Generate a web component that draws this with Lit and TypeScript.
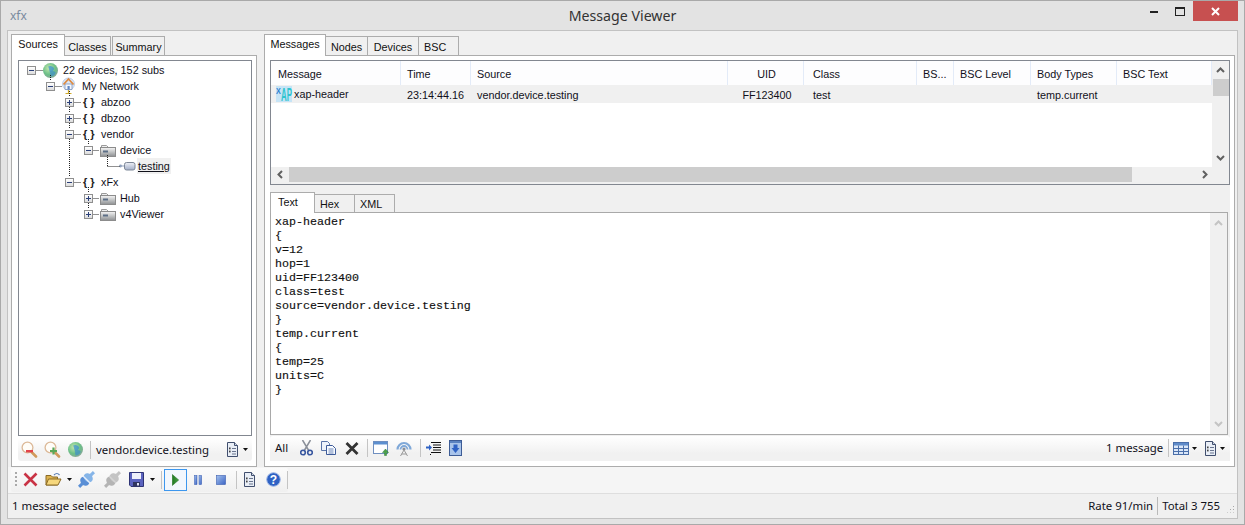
import { LitElement, html, css, svg, nothing } from "lit";
import { customElement } from "lit/decorators.js";

const s = (w: number, h: number, body: unknown, cls = "") =>
  html`<svg class="ic ${cls}" width=${w} height=${h} viewBox="0 0 ${w} ${h}">${body}</svg>`;

const globePaint = (r: number) => svg`
  <circle cx=${r} cy=${r} r=${r} fill="url(#gGlobe)"/>
  <path d="M${r * 0.7} ${r * 0.45}q${r * 0.6} -${r * 0.15} ${r * 0.8} ${r * 0.35}q-${r * 0.2} ${r * 0.5} -${r * 0.6} ${r * 0.35}z" fill="#3f93cf" opacity=".75"/>
  <path d="M${r * 0.9} ${r * 1.2}q${r * 0.6} -${r * 0.3} ${r * 0.8} ${r * 0.1}q-${r * 0.2} ${r * 0.5} -${r * 0.7} ${r * 0.5}z" fill="#3f8fc8" opacity=".7"/>`;

const globe = s(15, 15, globePaint(7.5));
const home = s(13, 18, svg`
  <circle cx="6.5" cy="7" r="6" fill="#dbe8f8" stroke="#9db6dc" stroke-width=".6"/>
  <path d="M3 7h7v5.5H3z" fill="#f4f7fc" stroke="#6f88b5" stroke-width=".7"/>
  <path d="M1.5 7.5L6.5 2l5 5.5" fill="none" stroke="#dd8a3f" stroke-width="1.8"/>
  <rect x="5.5" y="9" width="2.2" height="3.5" fill="#5f86c4"/>
  <path d="M6.5 13v3M3.5 16.5h6" stroke="#d1ab2c" stroke-width="1.2"/>`);
const folder = s(16, 13, svg`
  <path d="M1.5 3V1.5h5l1.5 1.5" fill="#eee" stroke="#9a9a9a"/>
  <rect x="0.5" y="3.5" width="15" height="9" fill="url(#gFold)" stroke="#8c8c8c"/>
  <path d="M3 7.5h5" stroke="#5d6f86" stroke-width="2"/>`);
const node = s(17, 10, svg`
  <circle cx="1.5" cy="5" r="1.4" fill="#8fa0bd"/>
  <path d="M2 5h4" stroke="#8fa0bd"/>
  <rect x="5.5" y="1.5" width="10.5" height="7.5" rx="2" fill="url(#gNode)" stroke="#7d8797"/>`);

const lens = (mark: unknown) => s(17, 17, svg`
  <path d="M9.5 10l5.5 5.5" stroke="#d09a5c" stroke-width="2.6" stroke-linecap="round"/>
  <circle cx="6.5" cy="6.5" r="5.4" fill="#fffdf8" stroke="#dcb998" stroke-width="1.3"/>
  ${mark}`);
const zoomOut = lens(svg`<rect x="5" y="9" width="7" height="2.4" fill="#e2434a"/>`);
const zoomIn = lens(svg`<path d="M9.5 6.5v7M6 10h7" stroke="#5aa858" stroke-width="2.2"/>`);
const doc = s(11, 15, svg`
  <path d="M.5.5h7l3 3v11H.5z" fill="#e9eef6" stroke="#414f6e"/>
  <path d="M7.5.5v3h3" fill="#cfd8e6" stroke="#414f6e"/>
  <path d="M5 6.5h4M5 9.5h4M5 12h4" stroke="#6a7690"/>
  <rect x="2" y="5.5" width="1.6" height="1.8" fill="#444"/><rect x="2" y="8.6" width="1.6" height="1.8" fill="#444"/>`);
const caret = s(5, 3, svg`<path d="M0 0h5L2.5 3z" fill="#111"/>`);
const redX = s(15, 15, svg`<path d="M1.5 1.5l12 12M13.5 1.5l-12 12" stroke="#c93345" stroke-width="2.6"/>`);
const openF = s(17, 15, svg`
  <path d="M1 3.5h5l1.5 1.5h5V13H1z" fill="#dcb24e" stroke="#8a6a26"/>
  <path d="M1 13l2.5-6h12.5L13 13z" fill="#f6d77c" stroke="#8a6a26"/>
  <path d="M9 3q3-3 5.5 0" fill="none" stroke="#5b7fb5" stroke-width="1.2"/>`);
const plug = (a: string, b: string, c: string) => s(17, 17, svg`
  <g transform="rotate(-45 8.5 8.5)">
    <rect x="-2" y="7" width="5" height="3" fill=${a}/>
    <rect x="14" y="7" width="5" height="3" fill=${b}/>
    <ellipse cx="6" cy="8.5" rx="4" ry="5" fill=${a}/>
    <ellipse cx="11" cy="8.5" rx="4" ry="5" fill=${b}/>
    <rect x="7.8" y="3.5" width="1.4" height="10" fill=${c}/>
  </g>`);
const floppy = s(15, 15, svg`
  <path d="M.5.5h14v14H2L.5 13z" fill="#5b63bf" stroke="#2e3476"/>
  <rect x="3" y="1" width="9" height="6" fill="#eef0fb"/>
  <rect x="4" y="10" width="7" height="4.5" fill="#30355f"/><rect x="8" y="11" width="2" height="2.5" fill="#dfe2f5"/>`);
const play = s(7, 12, svg`<path d="M.3.5l6.4 5.5-6.4 5.5z" fill="url(#gPlay)" stroke="#1c6a1c" stroke-width=".5"/>`);
const pause = s(8, 10, svg`
  <rect x=".4" y=".4" width="2.6" height="9.2" fill="url(#gBlue)" stroke="#3a5db0" stroke-width=".5"/>
  <rect x="5" y=".4" width="2.6" height="9.2" fill="url(#gBlue)" stroke="#3a5db0" stroke-width=".5"/>`);
const stop = s(10, 10, svg`<rect x=".5" y=".5" width="9" height="9" fill="url(#gBlue)" stroke="#3a5db0" stroke-width=".6"/>`);
const help = s(15, 15, svg`
  <circle cx="7.5" cy="7.5" r="6.8" fill="#2f62c4" stroke="#9db6e6"/>
  <text x="7.5" y="12" font-size="12" font-weight="700" text-anchor="middle" fill="#fff" font-family="Liberation Sans, sans-serif">?</text>`);
const cut = s(13, 16, svg`
  <path d="M2.5 0l6.5 11M10.5 0L4 11" stroke="#8a8f99" stroke-width="1.5"/>
  <circle cx="3" cy="12.5" r="2.3" fill="none" stroke="#37569f" stroke-width="1.6"/>
  <circle cx="10" cy="12.5" r="2.3" fill="none" stroke="#37569f" stroke-width="1.6"/>`);
const copy = s(15, 14, svg`
  <path d="M.5.5h6l2 2v7H.5z" fill="#eef3fb" stroke="#5a74a8"/>
  <path d="M5.5 4.5h6l3 3v6h-9z" fill="#f8fbff" stroke="#3e5b99"/>
  <path d="M7.5 8h5M7.5 10h5M7.5 12h5" stroke="#6d86b8"/>`);
const blackX = s(14, 13, svg`<path d="M1.5 1l11 11M12.5 1l-11 11" stroke="#333" stroke-width="2.8"/>`);
const winUp = s(16, 15, svg`
  <rect x=".5" y=".5" width="14" height="12" fill="#fff" stroke="#6f8fc0"/>
  <rect x="1" y="1" width="13" height="2.5" fill="#5d90d0"/>
  <path d="M11.5 14.5v-3H9.5l3-3.5 3 3.5h-2v3z" fill="#4aa048" stroke="#2f7d34" stroke-width=".5"/>`);
const antenna = s(16, 15, svg`
  <path d="M1.5 8.5a6.5 6.5 0 0 1 13 0" fill="none" stroke="#7fa8d8" stroke-width="2.2"/>
  <path d="M4.5 8.5a3.5 3.5 0 0 1 7 0" fill="none" stroke="#7fa8d8" stroke-width="1.8"/>
  <circle cx="8" cy="8" r="1.6" fill="#8a8f99"/>
  <path d="M8 9L4.5 15M8 9l3.5 6M5.5 13h5" stroke="#9a9a9a" fill="none"/>`);
const indent = s(15, 13, svg`
  <path d="M5 .5h10M7 3h8M7 5.5h8M7 8h8M5 10.5h10" stroke="#111"/>
  <path d="M0 4.5h3V2.5L6 5.5 3 8.5V6.5H0z" fill="#2f62c4"/>
  <path d="M4 12.5h1" stroke="#111"/>`);
const arrowDoc = s(13, 16, svg`
  <rect x=".5" y=".5" width="12" height="15" fill="#a9c4ea" stroke="#3d5c96"/>
  <rect x="1" y="1" width="11" height="2" fill="#5a82c0"/>
  <path d="M4.5 4.5h4v3.5h2L6.5 13l-4-5h2z" fill="#2f62c4"/>`);
const table = s(16, 13, svg`
  <rect x=".5" y=".5" width="15" height="12" fill="#dbe7f8" stroke="#4a6ea9"/>
  <rect x="1" y="1" width="14" height="2.5" fill="#5f8bc9"/>
  <path d="M5.5 3.5v9M10.5 3.5v9M1 6.5h14M1 9.5h14" stroke="#4a6ea9"/>`);
const chev = (d: string, c = "#606060") => s(9, 9, svg`<path d=${d} fill="none" stroke=${c} stroke-width="2"/>`);

const defs = svg`
  <svg width="0" height="0" style="position:absolute"><defs>
    <radialGradient id="gGlobe" cx=".4" cy=".35" r=".7"><stop offset="0" stop-color="#c6e8ae"/><stop offset=".6" stop-color="#6cc088"/><stop offset="1" stop-color="#8aa698"/></radialGradient>
    <linearGradient id="gFold" x2="0" y2="1"><stop offset="0" stop-color="#f6f6f6"/><stop offset="1" stop-color="#8d9092"/></linearGradient>
    <linearGradient id="gNode" x2="0" y2="1"><stop offset="0" stop-color="#eef0f6"/><stop offset="1" stop-color="#a2aec8"/></linearGradient>
    <linearGradient id="gPlay" x2="1" y2="0"><stop offset="0" stop-color="#1f7a1f"/><stop offset="1" stop-color="#49a049"/></linearGradient>
    <linearGradient id="gBlue" x2="1" y2="1"><stop offset="0" stop-color="#a4c2ee"/><stop offset="1" stop-color="#3a63c4"/></linearGradient>
  </defs></svg>`;

type Row = { d: number; exp?: "+" | "-"; icon: unknown; label: string; sel?: boolean };
const brace = html`<span class="brace">{ }</span>`;
const rows: Row[] = [
  { d: 0, exp: "-", icon: globe, label: "22 devices, 152 subs" },
  { d: 1, exp: "-", icon: home, label: "My Network" },
  { d: 2, exp: "+", icon: brace, label: "abzoo" },
  { d: 2, exp: "+", icon: brace, label: "dbzoo" },
  { d: 2, exp: "-", icon: brace, label: "vendor" },
  { d: 3, exp: "-", icon: folder, label: "device" },
  { d: 4, icon: node, label: "testing", sel: true },
  { d: 2, exp: "-", icon: brace, label: "xFx" },
  { d: 3, exp: "+", icon: folder, label: "Hub" },
  { d: 3, exp: "+", icon: folder, label: "v4Viewer" },
];
const OX = 19, OY = 61;
const dots: [number, number, number, number][] = [
  [50, 75, 50, 81], [69, 91, 69, 97], [69, 107, 69, 113], [69, 123, 69, 129], [69, 139, 69, 177],
  [88, 139, 88, 145], [107, 155, 107, 166], [107, 166, 120, 166], [88, 187, 88, 193], [88, 203, 88, 209],
  [36, 70, 43, 70], [55, 86, 62, 86], [74, 102, 81, 102], [74, 118, 81, 118], [74, 134, 81, 134],
  [93, 150, 99, 150], [74, 182, 81, 182], [93, 198, 99, 198], [93, 214, 99, 214],
];

const cols = [
  { t: "Message", w: 130, p: 7 }, { t: "Time", w: 70, p: 6 }, { t: "Source", w: 257, p: 6 }, { t: "UID", w: 76, p: 2, c: true },
  { t: "Class", w: 113, p: 9 }, { t: "BS...", w: 37, p: 6 }, { t: "BSC Level", w: 77, p: 6 }, { t: "Body Types", w: 86, p: 6 }, { t: "BSC Text", w: 95, p: 6 },
];
const cells = ["xap-header", "23:14:44.16", "vendor.device.testing", "FF123400", "test", "", "", "temp.current", ""];
const body = `xap-header
{
v=12
hop=1
uid=FF123400
class=test
source=vendor.device.testing
}
temp.current
{
temp=25
units=C
}`;

type Item = { x: number; c: unknown };
const bar = (origin: number, items: Item[]) =>
  items.map((it) => html`<span class="ti" style="left:${it.x - origin}px">${it.c}</span>`);
const sep = html`<span class="vsep"></span>`;

@customElement("app-root")
export class AppRoot extends LitElement {
  static styles = css`
    :host { display: block; width: 1245px; height: 525px; overflow: hidden; }
    * { box-sizing: border-box; }
    .win { width: 1245px; height: 525px; background: #e3e3e3; border: 1px solid #a9a9a9; display: flex; flex-direction: column; font: 10.8px/16px "Liberation Sans", sans-serif; color: #10101a; position: relative; }
    .title { height: 29px; flex: none; display: flex; align-items: center; position: relative; }
    .app { color: #7a8a9e; font: 12px/16px "Noto Sans", sans-serif; margin-left: 9px; }
    .caption { position: absolute; left: 0; right: 0; top: 5px; text-align: center; font: 14.2px/20px "Noto Sans", sans-serif; color: #333; }
    .wbtns { position: absolute; right: 6px; top: 0; height: 20px; display: flex; }
    .wb { width: 26px; height: 20px; display: flex; align-items: center; justify-content: center; }
    .close { width: 45px; background: #c75050; }
    .inner { flex: none; margin: 0 6px; height: 489px; background: #f0f0f0; border: 1px solid #c2c2c2; display: flex; flex-direction: column; }
    .main { flex: none; height: 436px; display: flex; gap: 7px; padding: 3px 2px 0 3px; }
    .side { width: 246px; flex: none; display: flex; flex-direction: column; }
    .right { width: 971px; flex: none; display: flex; flex-direction: column; }
    .tabs { height: 21px; flex: none; display: flex; align-items: flex-end; position: relative; z-index: 1; }
    .tab { height: 19px; border: 1px solid #acacac; border-bottom: 0; border-left-width: 0; background: #f0f0f0; display: flex; align-items: center; justify-content: center; padding-top: 1px; color: #111; }
    .tab.first { border-left-width: 1px; }
    .tab.on { height: 22px; margin-bottom: -1px; background: #fff; border-left-width: 1px; padding: 0 0 3px; }
    .tab.lead { justify-content: flex-start; padding-left: 7px; }
    .tab.on.lead { padding-left: 7px; }
    .panel { flex: 1; min-height: 0; background: #fff; border: 1px solid #acacac; display: flex; flex-direction: column; padding: 4px 4px 5px 6px; }
    .panel.rp { padding: 4px 5px 5px 5px; }
    .tree { height: 376px; flex: none; border: 1px solid #828790; background: #fff; position: relative; padding-top: 1px; }
    .lines { position: absolute; left: 0; top: 0; pointer-events: none; }
    .row { height: 16px; display: flex; align-items: center; }
    .slot { width: 16px; flex: none; display: flex; }
    .slot2 { width: 20px; flex: none; display: flex; align-items: center; }
    .exp { width: 9px; height: 9px; border: 1px solid #8f8f8f; background: linear-gradient(#fff, #dcdcdc); position: relative; display: block; }
    .exp::before { content: ""; position: absolute; left: 1px; top: 3px; width: 5px; height: 1px; background: #2a3f78; }
    .exp.plus::after { content: ""; position: absolute; left: 3px; top: 1px; width: 1px; height: 5px; background: #2a3f78; }
    .brace { font: 700 11px/16px "Liberation Sans", sans-serif; color: #222; white-space: pre; margin-left: 2px; }
    .sel { background: #f0f0f0; text-decoration: underline; padding: 0 1px; margin-left: -2px; }
    .ic { display: block; flex: none; }
    .tb { height: 23px; flex: none; margin-top: 2px; background: linear-gradient(#fff, #f1f1f1 70%); border-radius: 3px; position: relative; font: 11.4px/16px "Noto Sans", sans-serif; }
    .tb.msg { height: 25px; margin-top: 1px; }
    .ti { position: absolute; top: 0; height: 23px; display: flex; align-items: center; white-space: nowrap; }
    .tb.msg .ti { height: 24px; }
    .vsep { width: 1px; height: 18px; background: #c4c4c4; }
    .split { flex: 1; min-height: 0; background: #f0f0f0; display: flex; flex-direction: column; margin-right: -1px; }
    .list { height: 125px; flex: none; border: 1px solid #828790; background: #fff; display: grid; grid-template-columns: 941px 17px; grid-template-rows: 106px 17px; }
    .lhead { height: 24px; display: flex; background: #fdfdfe; }
    .hc { border-right: 1px solid #e3ebf8; padding-top: 5px; height: 24px; flex: none; white-space: nowrap; }
    .c { text-align: center; }
    .lrow { height: 18px; display: flex; background: #f0f0f0; }
    .rc { padding-top: 2px; flex: none; white-space: nowrap; }
    .first-c { display: flex; align-items: center; padding: 0 0 0 5px; gap: 2px; }
    .xap { width: 16px; height: 16px; background: #c6e4f6; display: flex; align-items: center; flex: none; }
    .xap svg { overflow: visible; }
    .xap text { font-family: "Liberation Sans", sans-serif; font-weight: 700; }
    .vbar { grid-column: 2; grid-row: 1; background: #f0f0f0; display: flex; flex-direction: column; align-items: center; }
    .up { height: 18px; padding-top: 5px; }
    .dn { margin-top: auto; padding-bottom: 5px; }
    .thumbv { width: 16px; height: 17px; flex: none; background: #cdcdcd; }
    .hbar { grid-column: 1 / 3; grid-row: 2; background: #f0f0f0; display: flex; align-items: flex-start; }
    .hl, .hr { width: 18px; height: 15px; display: flex; justify-content: center; align-items: center; }
    .hr { margin-left: auto; margin-right: 16px; }
    .thumbh { height: 15px; width: 843px; background: #cdcdcd; }
    .itabs { height: 20px; flex: none; margin-top: 7px; display: flex; align-items: flex-end; position: relative; z-index: 1; }
    .itabs .tab { height: 18px; }
    .itabs .tab.on { height: 21px; }
    .tbox { height: 223px; flex: none; margin-right: 2px; border: 1px solid #a9a9a9; background: #fff; display: flex; }
    pre { margin: 0; flex: 1; padding: 2px 0 0 4px; font: 11.67px/14px "Liberation Mono", monospace; color: #111; -webkit-text-stroke: .15px #111; }
    .dis { width: 17px; flex: none; background: #f0f0f0; display: flex; flex-direction: column; justify-content: space-between; align-items: center; padding: 6px 0; }
    .toolrow { height: 26px; flex: none; background: #f5f5f5; padding: 1px 0 0 3px; }
    .tools { height: 24px; width: 277px; background: linear-gradient(#fbfbfb, #f0f0f0); border-radius: 2px; position: relative; font: 11.4px/16px "Noto Sans", sans-serif; }
    .grip { position: absolute; left: 4px; top: 4px; width: 2px; height: 16px; background: repeating-linear-gradient(#a9a9a9 0 2px, transparent 2px 4px); }
    .playbtn { width: 23px; height: 22px; border: 1px solid #3d97ee; display: flex; align-items: center; justify-content: center; background: #f2f7fd; }
    .status { flex: 1; border-top: 1px solid #dedede; display: flex; align-items: center; padding: 0 3px 1px 4px; background: #f0f0f0; font: 11.4px/16px "Noto Sans", sans-serif; }
    .stxt { flex: 1; }
    .ssep { width: 1px; height: 18px; background: #b9b9b9; margin: 0 4px 0 4px; }
    .sgrip { width: 8px; height: 8px; margin: 6px 0 0 6px; background-image: radial-gradient(#a8a8a8 1px, transparent 1px); background-size: 3px 3px; clip-path: polygon(100% 0, 100% 100%, 0 100%); }
  `;

  tree() {
    return html`<div class="tree">
      <svg class="lines" width="232" height="230">
        ${dots.map(([a, b, c, d]) => svg`<path d="M${a - OX + 0.5} ${b - OY + (a === c ? 0 : 0.5)}L${c - OX + (a === c ? 0.5 : 0)} ${d - OY + (a === c ? 0 : 0.5)}" stroke="#222" stroke-dasharray="1 1"/>`)}
      </svg>
      ${rows.map((r) => html`<div class="row" style="padding-left:${8 + 19 * r.d}px">
        <span class="slot">${r.exp ? html`<span class="exp ${r.exp === "+" ? "plus" : ""}"></span>` : nothing}</span>
        <span class="slot2">${r.icon}</span>
        <span class=${r.sel ? "sel" : ""}>${r.label}</span>
      </div>`)}
    </div>`;
  }

  xap() {
    return html`<span class="xap"><svg width="16" height="16" viewBox="0 0 16 16">
      <text transform="translate(0 8) scale(.8 1)" font-size="9" fill="#2a7fd0">X</text>
      <text transform="translate(5 15) scale(.44 1)" font-size="18" fill="#2fc4cf">AP</text>
    </svg></span>`;
  }

  render() {
    return html`${defs}<div class="win">
      <div class="title">
        <span class="app">xfx</span>
        <div class="caption">Message Viewer</div>
        <div class="wbtns">
          <span class="wb">${s(9, 3, svg`<rect width="8" height="2" y="1" fill="#222"/>`)}</span>
          <span class="wb">${s(10, 9, svg`<rect x=".5" y=".5" width="9" height="8" fill="none" stroke="#222"/><rect width="10" height="2" fill="#222"/>`)}</span>
          <span class="wb close">${s(9, 9, svg`<path d="M1 1l7 7M8 1l-7 7" stroke="#fff" stroke-width="2"/>`)}</span>
        </div>
      </div>
      <div class="inner">
        <div class="main">
          <div class="side">
            <div class="tabs">
              <div class="tab on" style="width:54px">Sources</div>
              <div class="tab" style="width:46px">Classes</div>
              <div class="tab first" style="width:53px;margin-left:1px">Summary</div>
            </div>
            <div class="panel">
              ${this.tree()}
              <div class="tb">
                ${bar(18, [
                  { x: 21, c: zoomOut }, { x: 44, c: zoomIn }, { x: 68, c: globe }, { x: 90, c: sep },
                  { x: 96, c: "vendor.device.testing" }, { x: 227, c: doc }, { x: 243, c: caret },
                ])}
              </div>
            </div>
          </div>
          <div class="right">
            <div class="tabs">
              <div class="tab on" style="width:62px">Messages</div>
              <div class="tab" style="width:42px">Nodes</div>
              <div class="tab" style="width:51px">Devices</div>
              <div class="tab lead" style="width:40px;padding-left:5px">BSC</div>
            </div>
            <div class="panel rp">
              <div class="split">
                <div class="list">
                  <div>
                    <div class="lhead">${cols.map((c) => html`<div class="hc ${c.c ? "c" : ""}" style="width:${c.w}px;padding-left:${c.p}px">${c.t}</div>`)}</div>
                    <div class="lrow">
                      ${cols.map((c, i) => i === 0
                        ? html`<div class="rc first-c" style="width:${c.w}px">${this.xap()}<span>${cells[i]}</span></div>`
                        : html`<div class="rc ${c.c ? "c" : ""}" style="width:${c.w}px;padding-left:${c.p}px">${cells[i]}</div>`)}
                    </div>
                  </div>
                  <div class="vbar">
                    <span class="up">${chev("M1 6l3.5-3.5L8 6")}</span>
                    <span class="thumbv"></span>
                    <span class="dn">${chev("M1 3l3.5 3.5L8 3")}</span>
                  </div>
                  <div class="hbar">
                    <span class="hl">${chev("M6 1L2.5 4.5 6 8")}</span>
                    <span class="thumbh"></span>
                    <span class="hr">${chev("M3 1l3.5 3.5L3 8")}</span>
                  </div>
                </div>
                <div class="itabs">
                  <div class="tab on first lead" style="width:45px">Text</div>
                  <div class="tab lead" style="width:40px;padding-left:5px">Hex</div>
                  <div class="tab lead" style="width:40px;padding-left:5px">XML</div>
                </div>
                <div class="tbox">
                  <pre>${body}</pre>
                  <div class="dis">${chev("M1 6l3.5-3.5L8 6", "#c4c4c4")}${chev("M1 3l3.5 3.5L8 3", "#c4c4c4")}</div>
                </div>
                <div class="tb msg">
                  ${bar(270, [
                    { x: 275, c: "All" }, { x: 300, c: cut }, { x: 321, c: copy }, { x: 345, c: blackX },
                    { x: 367, c: sep }, { x: 373, c: winUp }, { x: 396, c: antenna },
                    { x: 420, c: sep }, { x: 426, c: indent }, { x: 449, c: arrowDoc },
                    { x: 1106, c: "1 message" }, { x: 1168, c: sep }, { x: 1173, c: table },
                    { x: 1192, c: caret }, { x: 1205, c: doc }, { x: 1220, c: caret },
                  ])}
                </div>
              </div>
            </div>
          </div>
        </div>
        <div class="toolrow">
          <div class="tools">
            <span class="grip"></span>
            ${bar(11, [
              { x: 23, c: redX }, { x: 45, c: openF }, { x: 67, c: caret }, { x: 78, c: plug("#5a8fd6", "#86b5e8", "#e8f0fb") },
              { x: 104, c: plug("#b4b4b4", "#c4c4c4", "#d4d4d4") }, { x: 129, c: floppy }, { x: 150, c: caret },
              { x: 161, c: sep }, { x: 164, c: html`<span class="playbtn">${play}</span>` },
              { x: 194, c: pause }, { x: 216, c: stop }, { x: 236, c: sep },
              { x: 244, c: doc }, { x: 266, c: help }, { x: 287, c: sep },
            ])}
          </div>
        </div>
        <div class="status">
          <span class="stxt">1 message selected</span>
          <span>Rate 91/min</span><span class="ssep"></span><span>Total 3 755</span><span class="sgrip"></span>
        </div>
      </div>
    </div>`;
  }
}
